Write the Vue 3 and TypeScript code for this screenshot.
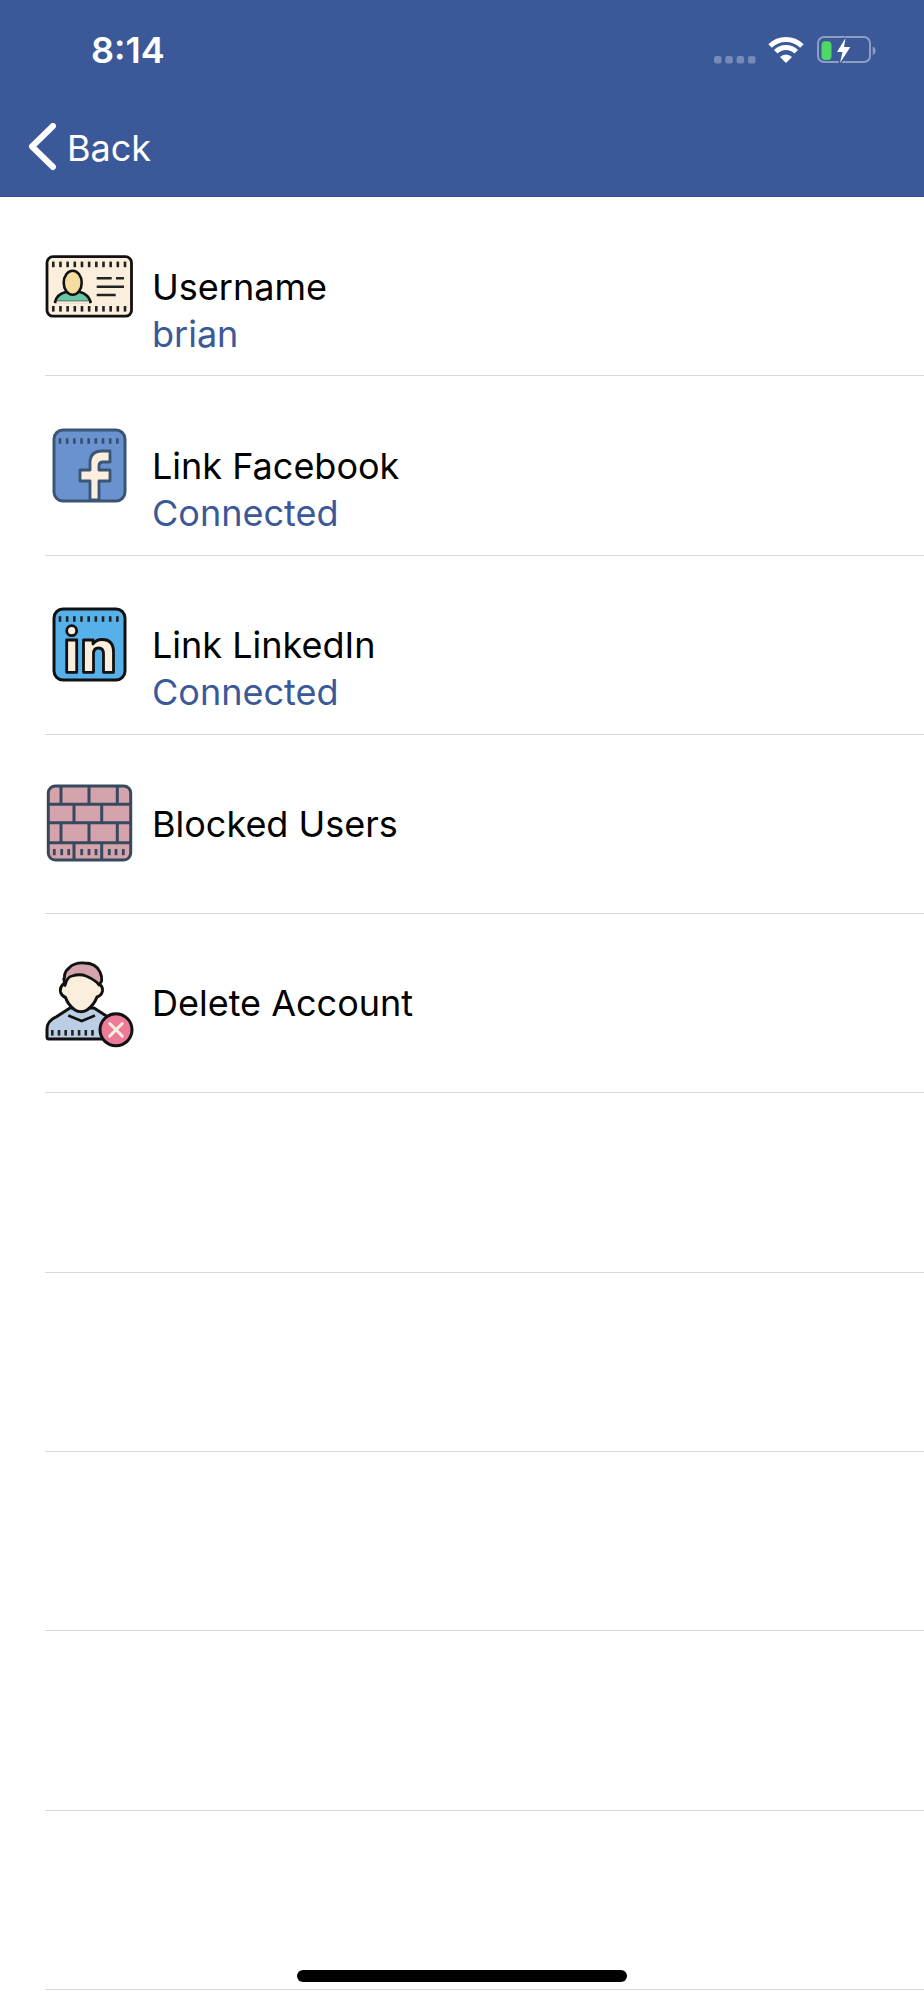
<script setup lang="ts">
interface Row {
  title?: string;
  sub?: string;
  icon?: string;
}
const rows: Row[] = [
  { title: "Username", sub: "brian", icon: "id" },
  { title: "Link Facebook", sub: "Connected", icon: "fb" },
  { title: "Link LinkedIn", sub: "Connected", icon: "li" },
  { title: "Blocked Users", icon: "wall" },
  { title: "Delete Account", icon: "del" },
  {}, {}, {}, {}, {},
];
const idDots = Array.from({ length: 11 }, (_, i) => 9.3 + i * 7.17);
const sqDots = Array.from({ length: 9 }, (_, i) => 16 + i * 7.17);
const wallDots = [10.3, 17.7, 24.7, 37.7, 45, 52, 65.3, 72, 79.3];
const personDots = [8.3, 15, 21.7, 28.4, 35.1, 41.8, 48.5];
</script>

<template>
  <div class="page">
    <header class="header">
      <div class="status">
        <span class="time">8:14</span>
        <svg class="status-icons" width="164" height="30" viewBox="0 0 164 30">
          <g fill="#fff" fill-opacity="0.3">
            <rect x="0" y="21" width="7.5" height="7.5" rx="2.2" />
            <rect x="11.3" y="21" width="7.5" height="7.5" rx="2.2" />
            <rect x="22.6" y="21" width="7.5" height="7.5" rx="2.2" />
            <rect x="34" y="21" width="7.5" height="7.5" rx="2.2" />
          </g>
          <g fill="none" stroke="#fff" stroke-width="5">
            <path d="M56.1 11.1 A22.5 22.5 0 0 1 87.9 11.1" />
            <path d="M61.75 16.75 A14.5 14.5 0 0 1 82.25 16.75" />
          </g>
          <path d="M72 28 L66 22 A8.4 8.4 0 0 1 78 22 Z" fill="#fff" />
          <rect x="104" y="2" width="52" height="25" rx="6" fill="none" stroke="#fff" stroke-opacity="0.42" stroke-width="2" />
          <rect x="107.5" y="6.3" width="10" height="18.7" rx="4" fill="#4cd964" />
          <path d="M131.5 3 L123 17 H128.5 L126 28 L136.3 12 H130 Z" fill="#fff" stroke="#3b5998" stroke-width="2.5" paint-order="stroke" />
          <path d="M158.7 11.5 Q161.5 12.5 161.5 15.8 Q161.5 19 158.7 20 Z" fill="#fff" fill-opacity="0.42" />
        </svg>
      </div>
      <div class="nav">
        <svg class="chev" width="32" height="50" viewBox="0 0 32 50">
          <path d="M25 3 L4 23.5 L25 44" fill="none" stroke="#fff" stroke-width="6" stroke-linecap="round" stroke-linejoin="round" />
        </svg>
        <span class="back">Back</span>
      </div>
    </header>

    <ul class="list">
      <li v-for="(r, i) in rows" :key="i" class="row">
        <div v-if="r.icon" class="icon">
          <svg v-if="r.icon === 'id'" width="90" height="90" viewBox="0 0 90 90">
            <rect x="3" y="14.7" width="84.5" height="59.5" rx="6" fill="#fbeedd" stroke="#111" stroke-width="2.8" />
            <g fill="#222">
              <rect v-for="x in idDots" :key="'a' + x" :x="x - 1.3" y="19.6" width="2.6" height="5.6" />
              <rect v-for="x in idDots" :key="'b' + x" :x="x - 1.3" y="64" width="2.6" height="5.6" />
            </g>
            <path d="M11 60 Q13 52 22 50 L36 50 Q44 52 46.7 60 Z" fill="#6cc5a5" stroke="#111" stroke-width="2.6" stroke-linejoin="round" />
            <path d="M12.5 60.5 H45" stroke="#fbeedd" stroke-width="2.6" />
            <ellipse cx="28.7" cy="40.7" rx="9" ry="12" fill="#f7dca0" stroke="#111" stroke-width="2.6" />
            <path d="M52.7 36.3 H67.7 M72 36.3 H80 M52.7 44.7 H80 M52.7 53 H71.7" stroke="#222" stroke-width="2.4" />
          </svg>

          <svg v-else-if="r.icon === 'fb'" width="90" height="90" viewBox="0 0 90 90">
            <rect x="10" y="9" width="71" height="71" rx="9" fill="#6a92cf" stroke="#3a5575" stroke-width="3" />
            <g fill="#33506f">
              <rect v-for="x in sqDots" :key="x" :x="x - 1.3" y="17.2" width="2.6" height="5.6" />
            </g>
            <path d="M46 79 V60 H36 V49 H46 V42 Q46 30 58 30 H66 V41 H59 Q55 41 55 45 V49 H66 V60 H55 V79 Z" fill="#fbeedd" stroke="#3a5575" stroke-width="2.8" stroke-linejoin="round" />
          </svg>

          <svg v-else-if="r.icon === 'li'" width="90" height="90" viewBox="0 0 90 90">
            <rect x="10" y="9" width="71" height="71" rx="9" fill="#56b1ea" stroke="#111" stroke-width="3" />
            <g fill="#222">
              <rect v-for="x in sqDots" :key="x" :x="x - 1.3" y="16.2" width="2.6" height="5.6" />
            </g>
            <g fill="#fbeedd" stroke="#111" stroke-width="2.8" stroke-linejoin="round">
              <circle cx="27.7" cy="30.7" r="5" />
              <rect x="22.7" y="40" width="10" height="32.3" />
              <path d="M39.5 40 H49 V44 Q52 39.5 58 39.5 Q69.5 39.5 69.5 52 V72.3 H59.5 V54 Q59.5 48 54.5 48 Q49.5 48 49.5 54 V72.3 H39.5 Z" />
            </g>
          </svg>

          <svg v-else-if="r.icon === 'wall'" width="90" height="90" viewBox="0 0 90 90">
            <rect x="4.3" y="6" width="82.4" height="74" rx="7" fill="#d5a3ab" stroke="#36495f" stroke-width="3" />
            <path d="M4.3 24.3 H86.7 M4.3 42.7 H86.7 M4.3 62.7 H86.7 M17 6 V24.3 M45 6 V24.3 M73.3 6 V24.3 M30 24.3 V42.7 M57.7 24.3 V42.7 M17 42.7 V62.7 M45 42.7 V62.7 M73.3 42.7 V62.7 M30 62.7 V80 M57.7 62.7 V80" fill="none" stroke="#36495f" stroke-width="3" />
            <g fill="#36495f">
              <rect v-for="x in wallDots" :key="x" :x="x - 1.4" y="69" width="2.8" height="6.2" />
            </g>
          </svg>

          <svg v-else width="90" height="90" viewBox="0 0 90 90">
            <path d="M3 78 V70 Q3 62 12 58 L26 49 H50 L64 58 Q75 62 75 70 V78 Q75 80 73 80 H5 Q3 80 3 78 Z" fill="#bccde6" stroke="#111" stroke-width="3" stroke-linejoin="round" />
            <path d="M24.3 56.5 L37.7 62 L51 56.5" fill="none" stroke="#111" stroke-width="2.6" />
            <g fill="#222">
              <rect v-for="x in personDots" :key="x" :x="x - 1.3" y="71" width="2.6" height="5.6" />
            </g>
            <path d="M20 20 L20.5 24 Q15.5 28 16.5 33 Q17.5 37 21.5 38.5 Q24 46 31 51 Q37 54.5 43 51 Q50 46 53 38 Q57.5 36.5 58.5 32 Q59 27 54.5 24.5 L52 14 L30 12 Z" fill="#fbeedd" stroke="#111" stroke-width="3" stroke-linejoin="round" />
            <path d="M21 26.5 Q18 14 25 9 Q30 3.5 40 4 Q52 4 56 13 Q58 17 57.7 22 L55 26 Q53 23 51 22 Q48 19.5 42 17 Q36 14.5 28 17 Q23 18 21 26.5 Z" fill="#d5a3ab" stroke="#111" stroke-width="2.8" stroke-linejoin="round" />
            <circle cx="72" cy="70.8" r="16" fill="#ec7a98" stroke="#111" stroke-width="3" />
            <path d="M65.7 64.5 L78.3 77.1 M78.3 64.5 L65.7 77.1" stroke="#fbeedd" stroke-width="3" stroke-linecap="round" />
          </svg>
        </div>
        <div v-if="r.title" class="text" :class="{ two: r.sub }">
          <span class="title">{{ r.title }}</span>
          <span v-if="r.sub" class="sub">{{ r.sub }}</span>
        </div>
      </li>
    </ul>

    <div class="home"></div>
  </div>
</template>

<style scoped>
.page {
  position: relative;
  width: 924px;
  height: 2000px;
  overflow: hidden;
  background: #fff;
  font-family: Inter, "Liberation Sans", sans-serif;
}
.header {
  height: 196px;
  background: #3b5998;
  border-bottom: 1px solid #35508e;
}
.status {
  display: flex;
  justify-content: space-between;
  align-items: flex-start;
  height: 118px;
  padding: 0 46px 0 91px;
}
.time {
  margin-top: 28px;
  font-size: 36px;
  line-height: 44px;
  font-weight: 600;
  color: #fff;
}
.status-icons {
  margin-top: 35px;
}
.nav {
  display: flex;
  align-items: center;
  height: 60px;
  padding-left: 28px;
}
.chev {
  flex: none;
}
.back {
  margin-left: 7px;
  font-size: 36px;
  line-height: 44px;
  color: #fff;
}
.list {
  list-style: none;
  margin: 0;
  padding: 0 0 0 45px;
}
.row {
  display: flex;
  align-items: center;
  height: 179.3px;
  box-sizing: border-box;
  border-bottom: 1.5px solid #d9d9d9;
}
.icon {
  flex: none;
  width: 90px;
  height: 90px;
  margin: 1px 18px 0 -1px;
}
.icon svg {
  display: block;
}
.text {
  display: flex;
  flex-direction: column;
}
.text.two {
  padding-top: 49px;
}
.title {
  font-size: 36px;
  line-height: 47px;
  color: #000;
}
.sub {
  font-size: 36px;
  line-height: 47px;
  color: #3b5998;
}
.home {
  position: absolute;
  left: 297px;
  top: 1970px;
  width: 330px;
  height: 12px;
  border-radius: 6px;
  background: #000;
}
</style>
